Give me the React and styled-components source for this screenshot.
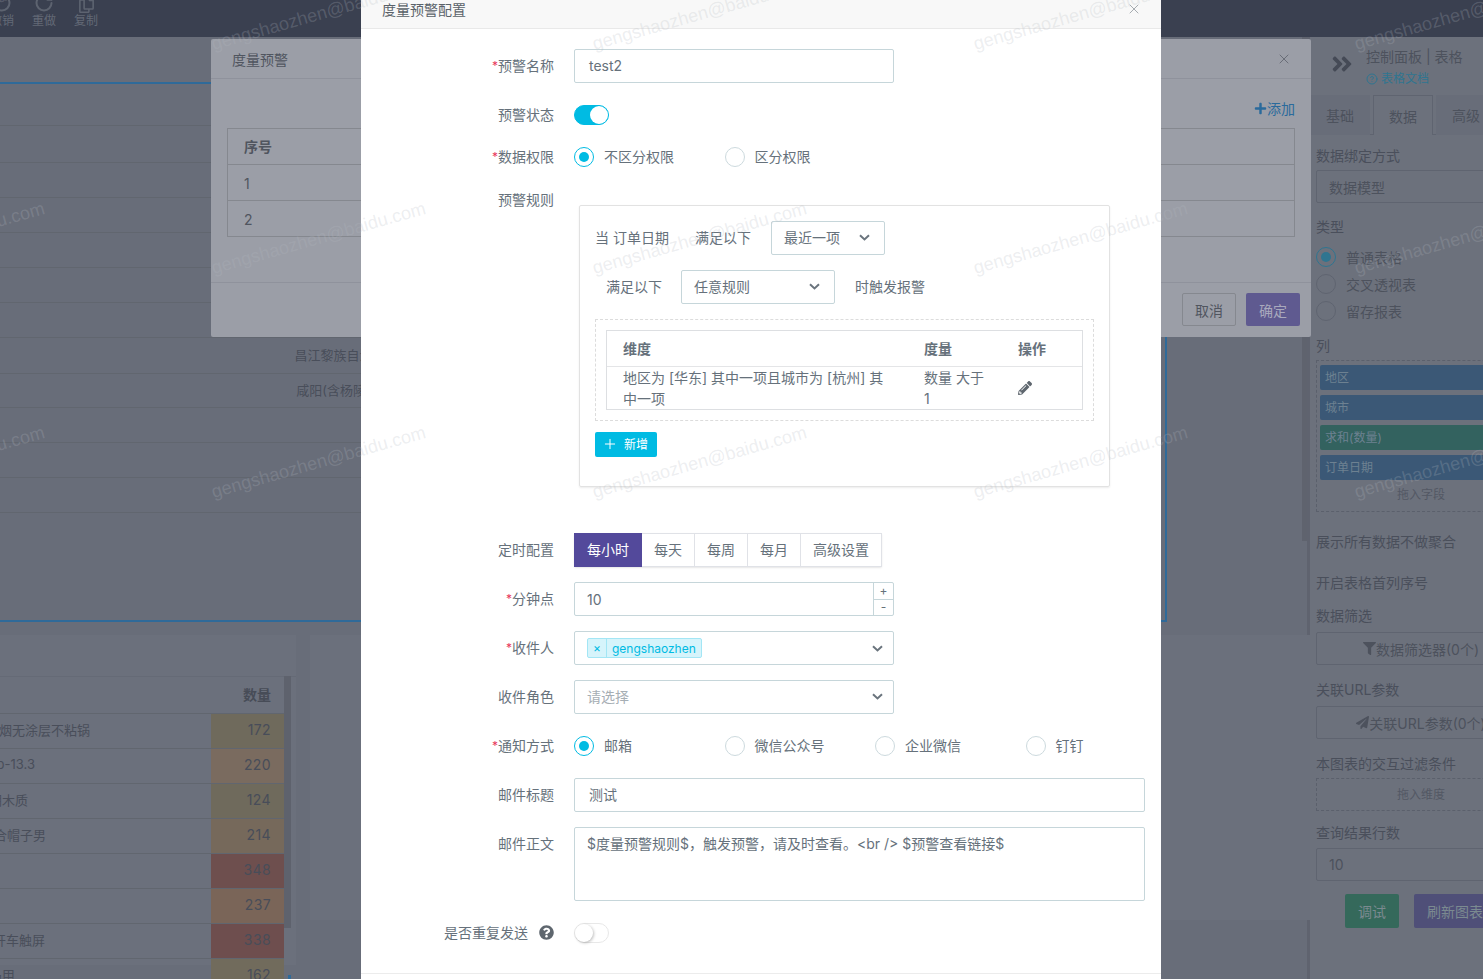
import React from "react";
import styled, { createGlobalStyle } from "styled-components";
import { FaPencilAlt, FaQuestionCircle, FaFilter, FaPaperPlane, FaAngleDoubleRight, FaPlus, FaRegCopy } from "react-icons/fa";
import { Plus, X, CircleHelp, RotateCcw, RotateCw } from "lucide-react";

const CJK = `Inter, "Noto Sans CJK SC", sans-serif`;
const CYAN = "#00bbe3";
const FIELD_BORDER = "#c6d6da";
const TEXT = "#66717b";

const GlobalStyle = createGlobalStyle`
  html, body { margin: 0; padding: 0; background: #686d79; }
  * { box-sizing: border-box; }
  body { font-family: ${CJK}; font-size: 14px; }
`;

const Page = styled.div`
  position: relative;
  width: 1483px;
  height: 979px;
  overflow: hidden;
  background: #686d79;
`;

/* Top toolbar */
const TopBar = styled.div`
  height: 37px;
  background: #3a4050;
  display: flex;
  gap: 18px;
  margin-left: -10px;
  overflow: hidden;
`;

const ToolItem = styled.div`
  width: 24px;
  display: flex;
  flex-direction: column;
  align-items: center;
  color: #636976;
  font-size: 12px;
  line-height: 14px;
`;

const ToolIcon = styled.div`
  height: 13px;
  display: flex;
  align-items: flex-end;
  justify-content: center;
  margin-bottom: 1px;
  color: #5d6370;
`;

/* Dimmed page behind the dialogs */
const Workspace = styled.div`
  display: flex;
  height: 942px;
`;

const Canvas = styled.div`
  position: relative;
  width: 1307px;
  padding-top: 45px;
`;

const CanvasThumb = styled.div`
  position: absolute;
  top: 0;
  right: 0;
  width: 5px;
  height: 504px;
  background: #5f636e;
`;

const ChartBox = styled.div`
  width: 1177px;
  height: 540px;
  margin-left: -10px;
  border: 2px solid #2f6a99;
  border-width: 2px 2px 2px 0;
`;

const ChartRow = styled.div`
  height: ${(p) => p.$h}px;
  border-bottom: 1px solid #61666f;
  font-size: 13px;
  color: #494e5a;
  display: flex;
  justify-content: center;
  align-items: center;
  padding-bottom: 2px;
  width: 700px;
`;

const BottomRow = styled.div`
  display: flex;
  gap: 14px;
  margin-top: 13px;
`;

const DataCard = styled.div`
  position: relative;
  width: 296px;
  height: 330px;
  background: #6b707c;
  padding-top: 41px;
  flex-shrink: 0;
`;

const HeaderRow = styled.div`
  height: 37px;
  border-top: 1px solid #656a76;
  display: flex;
  justify-content: flex-end;
  align-items: center;
  padding: 0 25px 3px 0;
  font-weight: 700;
  color: #474c57;
  font-size: 14px;
`;

const Scroll = styled.div`
  position: absolute;
  left: 284px;
  top: 41px;
  width: 7px;
  height: 252px;
  background: #5e626d;
`;

const ScrollMark = styled.div`
  position: absolute;
  left: 288px;
  top: 340px;
  width: 3px;
  height: 6px;
  background: #2f6a99;
`;

const DataRow = styled.div`
  height: 35px;
  width: 284px;
  display: flex;
  border-top: 1px solid #61666f;
`;

const DimCell = styled.div`
  width: 211px;
  display: flex;
  align-items: center;
  font-size: 13px;
  color: #494e5a;
  white-space: nowrap;
  padding-left: ${(p) => p.$end}px;
  padding-bottom: 4px;
  justify-content: flex-start;
`;

const DimText = styled.span`
  flex-shrink: 0;
  transform: translateX(-100%);
`;

const ValueCell = styled.div`
  width: 73px;
  background: ${(p) => p.$bg};
  display: flex;
  align-items: center;
  justify-content: flex-end;
  padding-right: 13px;
  padding-bottom: 4px;
  font-size: 14px;
  letter-spacing: 0.4px;
  color: #484d59;
`;

const SideCard = styled.div`
  width: 1000px;
  height: 285px;
  background: #6b707c;
  flex-shrink: 0;
`;

/* Right control panel */
const Panel = styled.aside`
  width: 176px;
  border-left: 3px solid #5f636f;
  background: #6c717c;
  overflow: hidden;
  color: #4a4f5b;
  font-size: 14px;
`;

const PanelInner = styled.div`
  width: 220px;
  padding-left: 6px;
`;

const PanelHead = styled.div`
  height: 58px;
  display: flex;
  align-items: center;
  gap: 12px;
  padding-left: 14px;
  color: #454a56;
`;

const HeadArrows = styled(FaAngleDoubleRight)`
  margin-top: -4px;
`;

const PanelTitle = styled.div`
  font-size: 14px;
  line-height: 22px;
  margin-top: -1px;
  white-space: nowrap;
  color: #4d525d;
`;

const DocLink = styled.div`
  display: flex;
  align-items: center;
  gap: 3px;
  margin-top: 4px;
  font-size: 12px;
  line-height: 14px;
  color: #2f7590;
`;

const Tabs = styled.div`
  display: flex;
  height: 40px;
  margin-left: -6px;
  border-bottom: 1px solid #5f6470;
`;

const Tab = styled.div`
  width: 60px;
  height: 40px;
  display: flex;
  align-items: center;
  justify-content: center;
  font-size: 14px;
  color: #4d525d;
  background: ${(p) => (p.$active ? "#6c717c" : "#686d79")};
  border: ${(p) => (p.$active ? "1px solid #5f6470" : "none")};
  border-bottom: none;
  margin-left: ${(p) => p.$left || 0}px;
`;

const PanelLabel = styled.div`
  line-height: 20px;
  margin-top: ${(p) => p.$top}px;
  white-space: nowrap;
`;

const PanelField = styled.div`
  height: ${(p) => p.$h || 33}px;
  margin-top: ${(p) => p.$top || 4}px;
  width: 210px;
  border: 1px solid #5f6470;
  border-radius: 2px;
  display: flex;
  align-items: center;
  padding-left: ${(p) => (p.$center ? 0 : 12)}px;
  justify-content: ${(p) => (p.$center ? "center" : "flex-start")};
  white-space: nowrap;
  color: #4d525d;
`;

const PanelDash = styled.div`
  width: 210px;
  margin-top: ${(p) => p.$top || 4}px;
  padding: 4px 3px 0;
  border: 1px dashed #5b606c;
  min-height: 32px;
  height: ${(p) => p.$h}px;
`;

const DashHint = styled.div`
  text-align: center;
  font-size: 12px;
  line-height: 18px;
  margin-top: ${(p) => p.$top}px;
  color: #535864;
`;

const Chip = styled.div`
  height: 25px;
  margin-bottom: 5px;
  background: ${(p) => (p.$measure ? "#33625f" : "#3b5876")};
  border-radius: 2px;
  padding-left: 5px;
  font-size: 12px;
  line-height: 25px;
  color: #6d8191;
`;

const PanelRadio = styled.div`
  display: flex;
  align-items: center;
  gap: 10px;
  height: 27px;
  margin-top: ${(p) => p.$top || 0}px;
  white-space: nowrap;
  color: #4d525d;
`;

const PanelDot = styled.span`
  width: 20px;
  height: 20px;
  border-radius: 50%;
  border: 1px solid ${(p) => (p.$on ? "#2f7590" : "#5f6470")};
  display: flex;
  align-items: center;
  justify-content: center;
  &::after {
    content: "";
    width: 10px;
    height: 10px;
    border-radius: 50%;
    background: ${(p) => (p.$on ? "#2f7590" : "transparent")};
  }
`;

const PanelActions = styled.div`
  display: flex;
  gap: 15px;
  margin: 13px 0 0 29px;
`;

const PanelButton = styled.div`
  width: ${(p) => p.$w}px;
  height: 34px;
  border-radius: 2px;
  background: ${(p) => p.$bg};
  color: #7b8a90;
  display: flex;
  align-items: center;
  justify-content: center;
  flex-shrink: 0;
  white-space: nowrap;
`;

/* Shared dialog shell */
const BackDialog = styled.section`
  position: absolute;
  left: 211px;
  top: 39px;
  width: 1100px;
  height: 298px;
  background: #9b9ea7;
  border-radius: 2px;
  color: #50555f;
`;

const BackHead = styled.div`
  height: 40px;
  border-bottom: 1px solid #8f929c;
  display: flex;
  align-items: center;
  justify-content: space-between;
  padding: 0 19px 0 21px;
`;

const BackBody = styled.div`
  height: 204px;
  padding: 0 16px;
  border-bottom: 1px solid #8f929c;
`;

const AddLink = styled.div`
  height: 49px;
  display: flex;
  justify-content: flex-end;
  align-items: center;
  color: #2a6a9c;
  font-size: 14px;
  padding-top: 9px;
`;

const BackTable = styled.div`
  border: 1px solid #85888f;
  border-bottom: none;
`;

const BackRow = styled.div`
  height: 36px;
  border-bottom: 1px solid #85888f;
  padding: ${(p) => (p.$head ? "0 0 2px 16px" : "1px 0 0 16px")};
  display: flex;
  align-items: center;
  font-weight: ${(p) => (p.$head ? 700 : 400)};
`;

const BackFoot = styled.div`
  display: flex;
  justify-content: flex-end;
  gap: 10px;
  padding: 10px 11px 0 0;
`;

const BackButton = styled.div`
  width: 54px;
  height: 33px;
  border-radius: 2px;
  display: flex;
  align-items: center;
  justify-content: center;
  background: ${(p) => (p.$primary ? "#5f5a90" : "transparent")};
  color: ${(p) => (p.$primary ? "#a9a9bd" : "#50555f")};
  border: ${(p) => (p.$primary ? "none" : "1px solid #85888f")};
`;

/* Front dialog */
const FrontDialog = styled.section`
  position: absolute;
  left: 361px;
  top: -12px;
  width: 800px;
  height: 1010px;
  background: #fff;
  color: ${TEXT};
`;

const FrontHead = styled.div`
  height: 41px;
  background: #f8f8f8;
  border-bottom: 1px solid #e9e9e9;
  display: flex;
  align-items: center;
  justify-content: space-between;
  padding: 2px 19px 0 21px;
  color: #5a6269;
`;

const FormBody = styled.div`
  padding-top: 20px;
`;

const FormRow = styled.div`
  display: flex;
  gap: 20px;
  margin-bottom: ${(p) => p.$gap ?? 15}px;
`;

const Label = styled.div`
  width: 193px;
  flex-shrink: 0;
  height: 34px;
  padding-bottom: 2px;
  display: flex;
  align-items: center;
  justify-content: flex-end;
  white-space: nowrap;
`;

const Required = styled.span`
  color: #e8375b;
  font-size: 12px;
`;

const HelpIcon = styled.span`
  display: flex;
  margin-left: 11px;
  color: #5e666e;
`;

const Control = styled.div`
  height: 34px;
  display: flex;
  align-items: center;
`;

const TextField = styled.div`
  width: ${(p) => p.$w}px;
  height: ${(p) => p.$h || 34}px;
  border: 1px solid ${FIELD_BORDER};
  border-radius: 2px;
  padding: ${(p) => (p.$h ? "7px 12px 0" : "0 14px")};
  line-height: ${(p) => (p.$h ? "18px" : "32px")};
  color: ${TEXT};
`;

const Switch = styled.span`
  width: 35px;
  height: 20px;
  border-radius: 10px;
  background: ${(p) => (p.$on ? CYAN : "#fff")};
  border: 1px solid ${(p) => (p.$on ? CYAN : "#e8e8e8")};
  display: flex;
  justify-content: ${(p) => (p.$on ? "flex-end" : "flex-start")};
  &::after {
    content: "";
    width: 18px;
    height: 18px;
    border-radius: 50%;
    background: #fff;
    box-shadow: ${(p) => (p.$on ? "none" : "1px 1px 3px rgba(0,0,0,.25)")};
  }
`;

const RadioGroup = styled.div`
  display: flex;
`;

const RadioItem = styled.div`
  width: 150.5px;
  display: flex;
  align-items: center;
  gap: 10px;
  white-space: nowrap;
`;

const RadioText = styled.span`
  margin-bottom: 2px;
`;

const RadioDot = styled.span`
  width: 20px;
  height: 20px;
  border-radius: 50%;
  border: 1px solid ${(p) => (p.$on ? CYAN : "#cddade")};
  display: flex;
  align-items: center;
  justify-content: center;
  &::after {
    content: "";
    width: 10px;
    height: 10px;
    border-radius: 50%;
    background: ${(p) => (p.$on ? CYAN : "transparent")};
  }
`;

const RuleCard = styled.div`
  width: 531px;
  height: 282px;
  margin: 22px 0 0 5px;
  border: 1px solid #e2e2e2;
  border-radius: 2px;
  box-shadow: 0 1px 2px rgba(0, 0, 0, 0.08);
  padding: 15px 15px 0;
`;

const RuleLine = styled.div`
  display: flex;
  align-items: center;
  height: 34px;
  margin-bottom: 15px;
  padding-left: ${(p) => p.$indent || 0}px;
`;

const RuleText = styled.span`
  width: ${(p) => p.$w}px;
  margin-left: ${(p) => p.$left || 0}px;
  padding-bottom: 3px;
  flex-shrink: 0;
  white-space: nowrap;
`;

const SelectBox = styled.div`
  width: ${(p) => p.$w}px;
  height: 34px;
  border: 1px solid ${FIELD_BORDER};
  border-radius: 2px;
  display: flex;
  align-items: center;
  justify-content: space-between;
  padding: ${(p) => p.$pad || "0 14px 2px 12px"};
  color: ${(p) => (p.$muted ? "#a6aeb4" : TEXT)};
  flex-shrink: 0;
`;

const Chevron = styled.svg`
  width: 11px;
  height: 7px;
  color: #6a747d;
  flex-shrink: 0;
`;

const DashedBox = styled.div`
  width: 499px;
  height: 102px;
  border: 1px dashed #dcdcdc;
  padding: 10px;
`;

const RuleTable = styled.div`
  width: 477px;
  height: 80px;
  border: 1px solid #dddfe2;
`;

const RuleRow = styled.div`
  display: grid;
  grid-template-columns: 301px 94px 1fr;
  height: ${(p) => p.$h}px;
  border-bottom: ${(p) => (p.$head ? "1px solid #e4e5e7" : "none")};
  font-weight: ${(p) => (p.$head ? 700 : 400)};
`;

const RuleCell = styled.div`
  padding: 0 16px;
  line-height: 21px;
  display: flex;
  align-items: center;
  color: ${TEXT};
`;

const AddButton = styled.div`
  width: 62px;
  height: 25px;
  margin-top: 11px;
  background: ${CYAN};
  border-radius: 2px;
  color: #fff;
  font-size: 12px;
  display: flex;
  align-items: center;
  gap: 6px;
  padding: 0 0 2px 7px;
`;

const Segments = styled.div`
  display: flex;
  border-radius: 2px;
  box-shadow: 0 1px 2px rgba(0, 0, 0, 0.1);
`;

const Segment = styled.div`
  width: ${(p) => p.$w}px;
  height: 34px;
  padding-bottom: 2px;
  display: flex;
  align-items: center;
  justify-content: center;
  background: ${(p) => (p.$active ? "#53499b" : "#fff")};
  color: ${(p) => (p.$active ? "#fff" : TEXT)};
  border: 1px solid ${(p) => (p.$active ? "#53499b" : "#e0e2e7")};
  border-left-width: ${(p) => (p.$first ? 1 : 0)}px;
`;

const NumberField = styled.div`
  width: 320px;
  height: 34px;
  border: 1px solid ${FIELD_BORDER};
  border-radius: 2px;
  display: flex;
  align-items: center;
  justify-content: space-between;
  padding-left: 12px;
`;

const Stepper = styled.div`
  width: 20px;
  height: 100%;
  border-left: 1px solid ${FIELD_BORDER};
  display: flex;
  flex-direction: column;
`;

const StepButton = styled.div`
  flex: 1;
  display: flex;
  align-items: center;
  justify-content: center;
  font-size: 12px;
  line-height: 1;
  border-bottom: ${(p) => (p.$top ? `1px solid ${FIELD_BORDER}` : "none")};
`;

const Tag = styled.div`
  height: 20px;
  border: 1px solid #a3e6f5;
  background: #d6f4fb;
  border-radius: 2px;
  color: ${CYAN};
  font-size: 12px;
  display: flex;
  align-items: center;
`;

const TagClose = styled.span`
  width: 19px;
  text-align: center;
  border-right: 1px solid #a3e6f5;
  line-height: 18px;
`;

const TagLabel = styled.span`
  padding: 0 5px;
`;

const FrontFoot = styled.div`
  border-top: 1px solid #ececec;
  margin-top: 23px;
`;

/* Account watermark laid over the whole page */
const Watermark = styled.div`
  position: absolute;
  left: -253px;
  top: -98px;
  display: grid;
  grid-template-columns: repeat(5, 381px);
  grid-auto-rows: 224px;
  pointer-events: none;
`;

const Stamp = styled.div`
  display: flex;
  align-items: center;
  justify-content: center;
  font-family: "Liberation Sans", sans-serif;
  font-size: 18.2px;
  white-space: nowrap;
  color: rgba(180, 185, 192, 0.24);
  transform: rotate(-15.8deg);
`;

const chartRows = [
  { h: 42 }, { h: 37 }, { h: 35 }, { h: 35 }, { h: 35 }, { h: 35 }, { h: 35 },
  { h: 36, text: "昌江黎族自治县" },
  { h: 34, text: "咸阳(含杨陵区)" },
  { h: 35 }, { h: 35 }, { h: 35 },
];

const dataRows = [
  { name: "防烟无涂层不粘锅", end: 90, value: 172, bg: "#6f6a5c" },
  { name: "b-13.3", end: 35, value: 220, bg: "#7a6b5f" },
  { name: "胡木质", end: 28, value: 124, bg: "#6f6a5c" },
  { name: "合帽子男", end: 46, value: 214, bg: "#76695b" },
  { name: "", end: 0, value: 348, bg: "#6e4f4e" },
  { name: "", end: 0, value: 237, bg: "#7a6558" },
  { name: "开车触屏", end: 45, value: 338, bg: "#6e4e4e" },
  { name: "马甲", end: 15, value: 162, bg: "#716b5c" },
];

const Caret = () => (
  <Chevron viewBox="0 0 11 7" fill="none">
    <path d="M1 1.2 5.5 5.4 10 1.2" stroke="currentColor" strokeWidth="2" />
  </Chevron>
);

const App = () => (
  <Page>
    <GlobalStyle />
    <TopBar>
      <ToolItem>
        <ToolIcon><RotateCcw size={20} strokeWidth={2.4} /></ToolIcon>撤销
      </ToolItem>
      <ToolItem>
        <ToolIcon><RotateCw size={20} strokeWidth={2.4} /></ToolIcon>重做
      </ToolItem>
      <ToolItem>
        <ToolIcon><FaRegCopy size={17} /></ToolIcon>复制
      </ToolItem>
    </TopBar>

    <Workspace>
      <Canvas>
        <CanvasThumb />
        <ChartBox>
          {chartRows.map((row, i) => (
            <ChartRow key={i} $h={row.h}>{row.text}</ChartRow>
          ))}
        </ChartBox>
        <BottomRow>
          <DataCard>
            <HeaderRow>数量</HeaderRow>
            {dataRows.map((row) => (
              <DataRow key={row.value}>
                <DimCell $end={row.end}><DimText>{row.name}</DimText></DimCell>
                <ValueCell $bg={row.bg}>{row.value}</ValueCell>
              </DataRow>
            ))}
            <Scroll />
            <ScrollMark />
          </DataCard>
          <SideCard />
        </BottomRow>
      </Canvas>

      <Panel>
        <PanelInner>
          <PanelHead>
            <HeadArrows size={24} />
            <div>
              <PanelTitle>控制面板 | 表格</PanelTitle>
              <DocLink><CircleHelp size={12} />表格文档</DocLink>
            </div>
          </PanelHead>
          <Tabs>
            <Tab>基础</Tab>
            <Tab $active $left={3}>数据</Tab>
            <Tab $left={3}>高级</Tab>
          </Tabs>
          <PanelLabel $top={11}>数据绑定方式</PanelLabel>
          <PanelField>数据模型</PanelField>
          <PanelLabel $top={14}>类型</PanelLabel>
          <PanelRadio $top={6}><PanelDot $on />普通表格</PanelRadio>
          <PanelRadio><PanelDot />交叉透视表</PanelRadio>
          <PanelRadio><PanelDot />留存报表</PanelRadio>
          <PanelLabel $top={12}>列</PanelLabel>
          <PanelDash $h={152}>
            <Chip>地区</Chip>
            <Chip>城市</Chip>
            <Chip $measure>求和(数量)</Chip>
            <Chip>订单日期</Chip>
            <DashHint $top={6}>拖入字段</DashHint>
          </PanelDash>
          <PanelLabel $top={20}>展示所有数据不做聚合</PanelLabel>
          <PanelLabel $top={21}>开启表格首列序号</PanelLabel>
          <PanelLabel $top={13}>数据筛选</PanelLabel>
          <PanelField $top={6} $center><FaFilter size={13} />数据筛选器(0个)</PanelField>
          <PanelLabel $top={15}>关联URL参数</PanelLabel>
          <PanelField $top={6} $center><FaPaperPlane size={13} />关联URL参数(0个)</PanelField>
          <PanelLabel $top={15}>本图表的交互过滤条件</PanelLabel>
          <PanelDash $h={33} $top={4}><DashHint $top={3}>拖入维度</DashHint></PanelDash>
          <PanelLabel $top={12}>查询结果行数</PanelLabel>
          <PanelField $top={5}>10</PanelField>
          <PanelActions>
            <PanelButton $w={54} $bg="#35695b">调试</PanelButton>
            <PanelButton $w={82} $bg="#4f4f78">刷新图表</PanelButton>
          </PanelActions>
        </PanelInner>
      </Panel>
    </Workspace>

    <BackDialog>
      <BackHead>
        度量预警
        <X size={16} strokeWidth={1} />
      </BackHead>
      <BackBody>
        <AddLink><FaPlus size={13} />添加</AddLink>
        <BackTable>
          <BackRow $head>序号</BackRow>
          <BackRow>1</BackRow>
          <BackRow>2</BackRow>
        </BackTable>
      </BackBody>
      <BackFoot>
        <BackButton>取消</BackButton>
        <BackButton $primary>确定</BackButton>
      </BackFoot>
    </BackDialog>

    <FrontDialog>
      <FrontHead>
        度量预警配置
        <X size={16} strokeWidth={1} color="#7b848b" />
      </FrontHead>
      <FormBody>
        <FormRow>
          <Label><Required>*</Required>预警名称</Label>
          <TextField $w={320}>test2</TextField>
        </FormRow>
        <FormRow $gap={8}>
          <Label>预警状态</Label>
          <Control><Switch $on /></Control>
        </FormRow>
        <FormRow $gap={9}>
          <Label><Required>*</Required>数据权限</Label>
          <Control>
            <RadioGroup>
              <RadioItem><RadioDot $on /><RadioText>不区分权限</RadioText></RadioItem>
              <RadioItem><RadioDot /><RadioText>区分权限</RadioText></RadioItem>
            </RadioGroup>
          </Control>
        </FormRow>
        <FormRow $gap={46}>
          <Label>预警规则</Label>
          <RuleCard>
            <RuleLine>
              <RuleText $w={100}>当 订单日期</RuleText>
              <RuleText $w={76}>满足以下</RuleText>
              <SelectBox $w={114}>最近一项<Caret /></SelectBox>
            </RuleLine>
            <RuleLine $indent={11}>
              <RuleText $w={75}>满足以下</RuleText>
              <SelectBox $w={154}>任意规则<Caret /></SelectBox>
              <RuleText $w={90} $left={20}>时触发报警</RuleText>
            </RuleLine>
            <DashedBox>
              <RuleTable>
                <RuleRow $head $h={36}>
                  <RuleCell>维度</RuleCell>
                  <RuleCell>度量</RuleCell>
                  <RuleCell>操作</RuleCell>
                </RuleRow>
                <RuleRow $h={42}>
                  <RuleCell>地区为 [华东] 其中一项且城市为 [杭州] 其中一项</RuleCell>
                  <RuleCell>数量 大于 1</RuleCell>
                  <RuleCell><FaPencilAlt size={14} color="#5e666e" /></RuleCell>
                </RuleRow>
              </RuleTable>
            </DashedBox>
            <AddButton><Plus size={16} strokeWidth={1.5} />新增</AddButton>
          </RuleCard>
        </FormRow>
        <FormRow>
          <Label>定时配置</Label>
          <Segments>
            <Segment $w={68} $active $first>每小时</Segment>
            <Segment $w={53}>每天</Segment>
            <Segment $w={53}>每周</Segment>
            <Segment $w={53}>每月</Segment>
            <Segment $w={81}>高级设置</Segment>
          </Segments>
        </FormRow>
        <FormRow>
          <Label><Required>*</Required>分钟点</Label>
          <NumberField>
            10
            <Stepper>
              <StepButton $top>+</StepButton>
              <StepButton>-</StepButton>
            </Stepper>
          </NumberField>
        </FormRow>
        <FormRow>
          <Label><Required>*</Required>收件人</Label>
          <SelectBox $w={320} $pad="0 10px 0 12px">
            <Tag><TagClose>×</TagClose><TagLabel>gengshaozhen</TagLabel></Tag>
            <Caret />
          </SelectBox>
        </FormRow>
        <FormRow>
          <Label>收件角色</Label>
          <SelectBox $w={320} $pad="0 10px 2px 12px" $muted>请选择<Caret /></SelectBox>
        </FormRow>
        <FormRow>
          <Label><Required>*</Required>通知方式</Label>
          <Control>
            <RadioGroup>
              <RadioItem><RadioDot $on /><RadioText>邮箱</RadioText></RadioItem>
              <RadioItem><RadioDot /><RadioText>微信公众号</RadioText></RadioItem>
              <RadioItem><RadioDot /><RadioText>企业微信</RadioText></RadioItem>
              <RadioItem><RadioDot /><RadioText>钉钉</RadioText></RadioItem>
            </RadioGroup>
          </Control>
        </FormRow>
        <FormRow>
          <Label>邮件标题</Label>
          <TextField $w={571}>测试</TextField>
        </FormRow>
        <FormRow>
          <Label>邮件正文</Label>
          <TextField $w={571} $h={74}>$度量预警规则$，触发预警，请及时查看。&lt;br /&gt; $预警查看链接$</TextField>
        </FormRow>
        <FormRow $gap={0}>
          <Label>是否重复发送<HelpIcon><FaQuestionCircle size={15} /></HelpIcon></Label>
          <Control><Switch /></Control>
        </FormRow>
        <FrontFoot />
      </FormBody>
    </FrontDialog>

    <Watermark>
      {Array.from({ length: 15 }, (_, i) => (
        <Stamp key={i}>gengshaozhen@baidu.com</Stamp>
      ))}
    </Watermark>
  </Page>
);

export default App;
